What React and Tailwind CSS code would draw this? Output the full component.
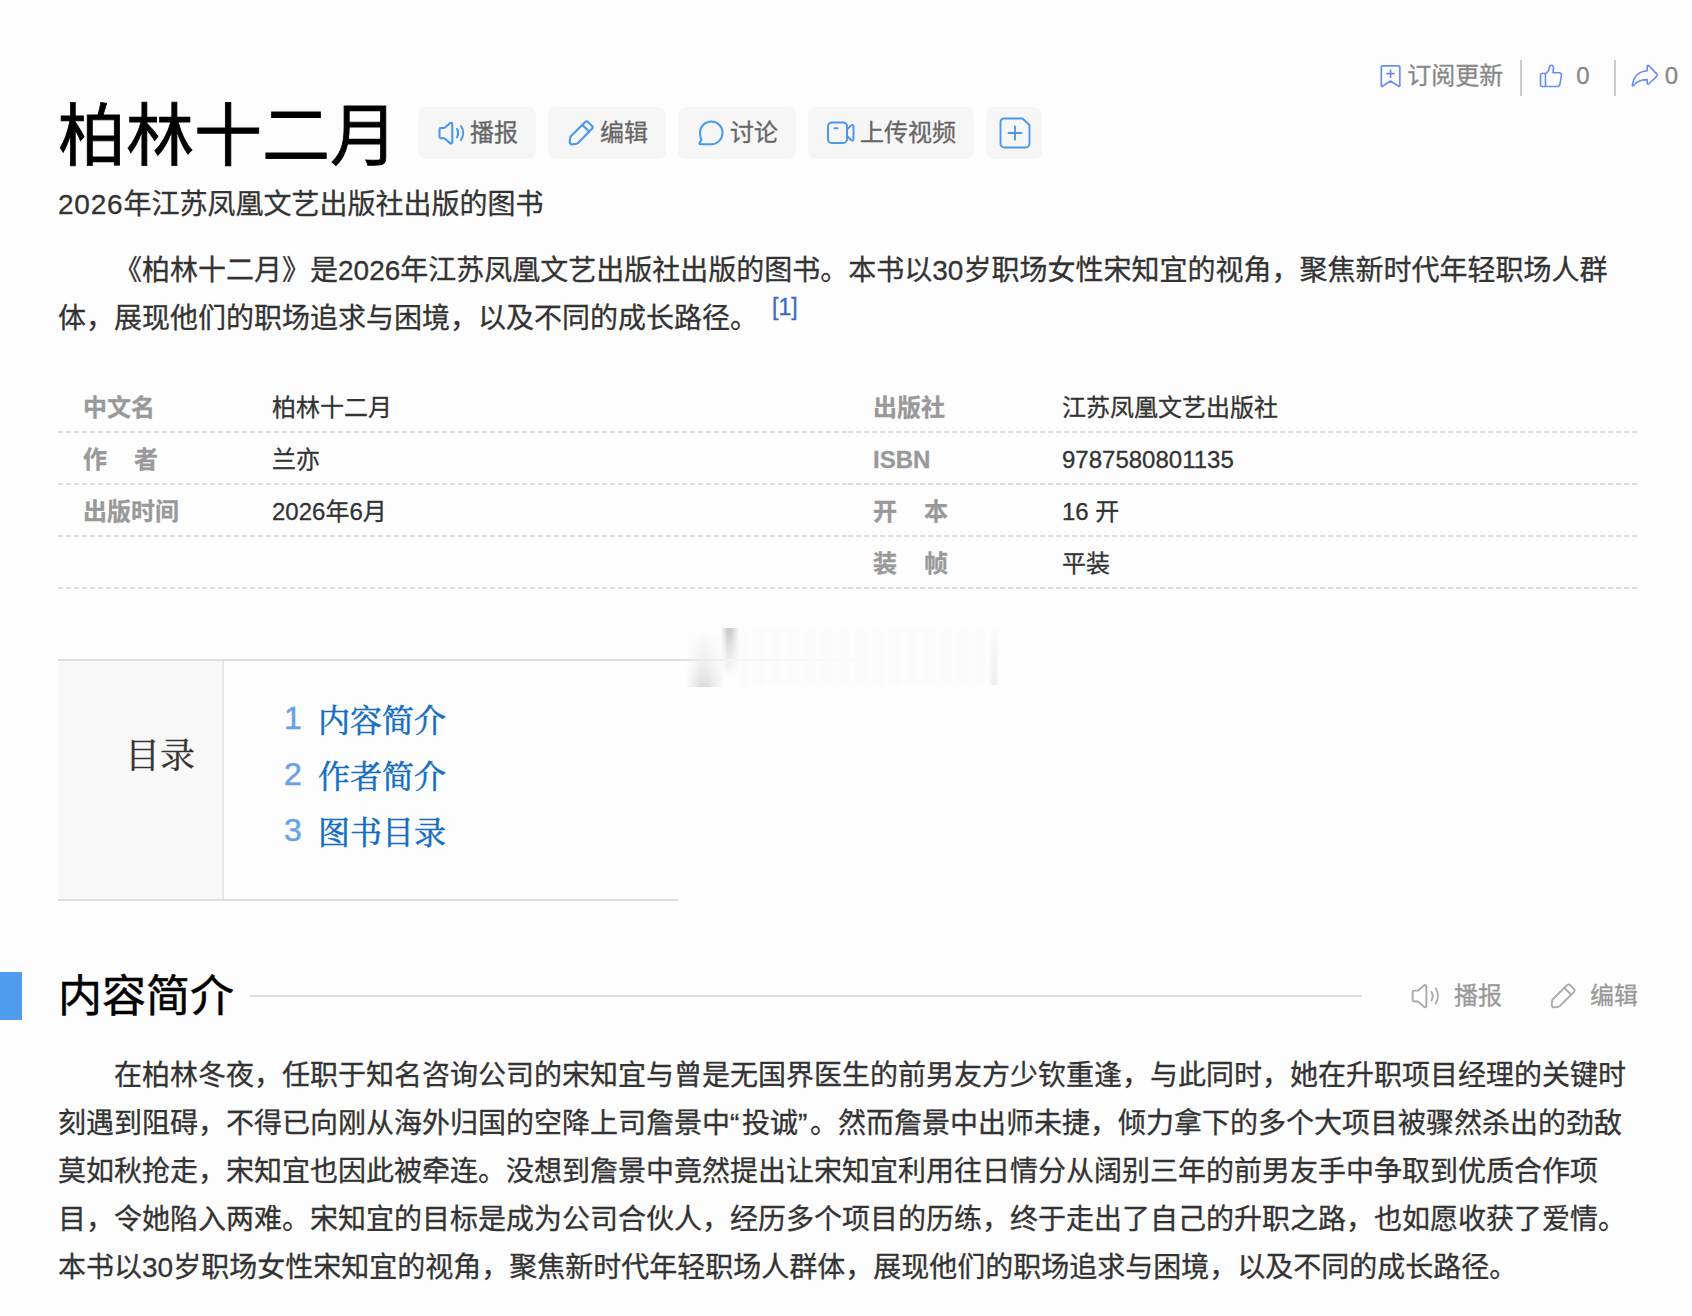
import React from "react";

const stroke = { fill: "none", stroke: "currentColor", strokeLinecap: "round", strokeLinejoin: "round" };

function Speaker({ w = 2.1, className }) {
  return (
    <svg viewBox="0 0 28 28" className={className} {...stroke} strokeWidth={w}>
      <path d="M2.500 10.400c0-.8.600-1.400 1.400-1.400h3.400l5.800-4.900c.9-.7 2.200-.1 2.200 1v18c0 1.100-1.300 1.700-2.200 1l-5.800-4.900H3.900c-.8 0-1.400-.6-1.400-1.400z" />
      <path d="M20 10c1.500 2.500 1.500 5.700 0 8.200M24 7c2.800 4.200 2.800 9.800 0 14" />
    </svg>
  );
}

function Pencil({ w = 2.1, className }) {
  return (
    <svg viewBox="0 0 28 28" className={className} {...stroke} strokeWidth={w}>
      <path d="M18.200 3c.8-.8 2-.8 2.800 0l4 4c.8.8.8 2 0 2.800L11 23.900c-.5.5-1 .8-1.700.9l-3.800.6c-1.700.2-3-1-2.800-2.700l.5-4c.1-.7.400-1.200.9-1.700z" />
      <path d="M15.400 5.900l6.700 6.700" />
    </svg>
  );
}

function Chat({ className }) {
  return (
    <svg viewBox="0 0 28 28" className={className} {...stroke} strokeWidth="2">
      <path d="M14.300 2.500c6.300 0 11.200 5 11.200 11.300S20.600 25.200 14.300 25.200H3.300c-.9 0-1.200-.8-.7-1.400l1.900-2.900C3.500 18.800 3 16.500 3 13.800 3 7.500 8 2.500 14.300 2.500z" />
    </svg>
  );
}

function Video({ className }) {
  return (
    <svg viewBox="0 0 30 28" className={className} {...stroke} strokeWidth="2">
      <rect x="2" y="3.500" width="19" height="20.500" rx="3.800" />
      <path d="M8.500 9.200h3M21 10.500l4.200-4.100c.8-.7 2.300-.4 2.300.9v12.900c0 1.300-1.500 1.600-2.300.9L21 17" />
    </svg>
  );
}

function AddBox({ className }) {
  return (
    <svg viewBox="0 0 32 32" className={className} {...stroke} strokeWidth="1.900">
      <path d="M5 1.500h18.500L30.500 8v18.500a4 4 0 0 1-4 4H5.500a4 4 0 0 1-4-4V5a3.500 3.500 0 0 1 3.500-3.500zM16 9.500v13M9.500 16h13" />
    </svg>
  );
}

function Bookmark({ className }) {
  return (
    <svg viewBox="0 0 24 26" className={className} {...stroke} strokeWidth="1.700">
      <path d="M3.500 2.800h16c.8 0 1.300.5 1.300 1.300v18.600c0 .7-.7 1-1.200.6L11.500 18l-8 5.300c-.6.4-1.200.1-1.200-.6V4.100c0-.8.5-1.300 1.200-1.300zM11.500 7.200v7M8 10.700h7" />
    </svg>
  );
}

function Thumb({ className }) {
  return (
    <svg viewBox="0 0 24 24" className={className} {...stroke} strokeWidth="1.600">
      <path d="M3 9.500h3.500v13H3c-.8 0-1.500-.6-1.500-1.500V11c0-.9.700-1.500 1.500-1.500zM6.500 9.500c2.600-1.400 3.600-3.400 3.900-6.300.1-1.200.8-2 1.900-2 1.500 0 2.400 1.400 2.200 3.200l-.6 4.300h6.200c1.600 0 2.600 1.300 2.300 2.900l-1.400 8.200c-.3 1.600-1.400 2.700-3 2.700H6.500" />
    </svg>
  );
}

function Share({ className }) {
  return (
    <svg viewBox="0 0 28 24" className={className} {...stroke} strokeWidth="1.600">
      <path d="M16.200 2.300c0-.8.9-1.200 1.500-.7l8 8.300c.8.900.8 1.700 0 2.500l-8 7.600c-.6.500-1.500.1-1.500-.7v-3.700c-6-.2-10.500 1.800-14 6.200-.4.400-.9.200-.8-.4C2.400 12.800 7.700 7.600 16.200 6.800z" />
    </svg>
  );
}

const btn = "flex h-[52px] items-center rounded-lg bg-[#f6f6f6] text-2xl text-[#666]";
const blue = "text-[#4b97ea]";

const left = [["中文名", "柏林十二月"], ["作|者", "兰亦"], ["出版时间", "2026年6月"], ["", ""]];
const right = [["出版社", "江苏凤凰文艺出版社"], ["ISBN", "9787580801135"], ["开|本", "16 开"], ["装|帧", "平装"]];

function Column({ rows }) {
  return (
    <dl className="w-[790px]">
      {rows.map(([k, v], i) => (
        <div key={i} className="flex h-[52px] flex-col">
          <div className="flex h-[50px] items-center pt-[3px] pl-[25px] text-2xl">
            <dt className="flex w-[189px] gap-[27px] font-bold text-[#999]">
              {k.split("|").map((c) => (
                <span key={c}>{c}</span>
              ))}
            </dt>
            <dd className="text-[#333]">{v}</dd>
          </div>
          <div className="h-[2px] bg-[repeating-linear-gradient(90deg,#dedede_0px,#dedede_4.5px,transparent_5px,transparent_8px)]" />
        </div>
      ))}
    </dl>
  );
}

const body = [
  "在柏林冬夜，任职于知名咨询公司的宋知宜与曾是无国界医生的前男友方少钦重逢，与此同时，她在升职项目经理的关键时",
  <>
    刻遇到阻碍，不得已向刚从海外归国的空降上司詹景中<span className="tracking-[2.6px]">“</span>投诚
    <span className="tracking-[2.6px]">”</span>。然而詹景中出师未捷，倾力拿下的多个大项目被骤然杀出的劲敌
  </>,
  "莫如秋抢走，宋知宜也因此被牵连。没想到詹景中竟然提出让宋知宜利用往日情分从阔别三年的前男友手中争取到优质合作项",
  "目，令她陷入两难。宋知宜的目标是成为公司合伙人，经历多个项目的历练，终于走出了自己的升职之路，也如愿收获了爱情。",
  "本书以30岁职场女性宋知宜的视角，聚焦新时代年轻职场人群体，展现他们的职场追求与困境，以及不同的成长路径。",
];

export default function App() {
  return (
    <div
      lang="zh-CN"
      className="flex h-[1316px] w-[1692px] flex-col overflow-hidden bg-[#fdfdfd] font-['Liberation_Sans','Noto_Sans_CJK_SC',sans-serif] whitespace-nowrap text-[#333] [-webkit-text-stroke:0.3px]"
    >
      <div className="flex h-[98px] items-start justify-end pt-[58px] pr-[14px] text-2xl text-[#888]">
        <div className="flex h-9 items-center">
          <Bookmark className="mr-1 h-[26px] w-6 text-[#6b8cf0]" />
          <span>订阅更新</span>
          <span className="mt-1 ml-[17px] h-9 w-[2px] bg-[#ccc]" />
          <Thumb className="ml-[17px] h-6 w-6 text-[#6b8cf0]" />
          <span className="ml-[13px]">0</span>
          <span className="mt-1 ml-6 h-9 w-[2px] bg-[#ccc]" />
          <Share className="mr-[6px] ml-[15px] h-6 w-7 text-[#6b8cf0]" />
          <span>0</span>
        </div>
      </div>

      <header className="flex h-[76px] items-center pl-[58px]">
        <h1 className="w-[360px] text-[68px] leading-[72px] text-black [-webkit-text-stroke:0.8px]">柏林十二月</h1>
        <div className="flex gap-3 pb-[6px]">
          <button className={btn + " w-[118px] pl-[19px]"}>
            <Speaker className={"mr-[5px] h-7 w-7 " + blue} />播报
          </button>
          <button className={btn + " w-[118px] pl-[19px]"}>
            <Pencil className={"mr-[5px] h-7 w-7 " + blue} />编辑
          </button>
          <button className={btn + " w-[118px] pl-[19px]"}>
            <Chat className={"mr-[5px] h-7 w-7 " + blue} />讨论
          </button>
          <button className={btn + " w-[166px] pl-[18px]"}>
            <Video className={"mr-1 h-7 w-[30px] " + blue} />上传视频
          </button>
          <button className={btn + " w-14 pl-[13px]"}>
            <AddBox className={"h-8 w-8 " + blue} />
          </button>
        </div>
      </header>

      <p className="h-[73px] pt-[11px] pl-[58px] text-[28px] leading-10">
        <span className="tracking-[0.8px]">2026</span>年江苏凤凰文艺出版社出版的图书
      </p>

      <div className="h-[134px] pl-[58px] text-[28px] leading-[48px]">
        <p className="pl-14">《柏林十二月》是2026年江苏凤凰文艺出版社出版的图书。本书以30岁职场女性宋知宜的视角，聚焦新时代年轻职场人群</p>
        <p className="flex">
          体，展现他们的职场追求与困境，以及不同的成长路径。
          <a className="-mt-3 ml-[14px] text-[23px] text-[#3a6bc0]">[1]</a>
        </p>
      </div>

      <section className="flex h-[278px] pl-[58px]">
        <Column rows={left} />
        <Column rows={right} />
      </section>

      <section className="relative flex h-[313px] pl-[58px]">
        <div className="flex h-[242px] w-[620px] border-y-2 border-[#dedede]">
          <div className="h-full w-[166px] border-r-2 border-[#e6e6e6] bg-[#f8f8f8] pt-[66px] pl-[67px] font-['Noto_Serif_CJK_SC','Noto_Sans_CJK_SC',serif] text-[35px] leading-[52px]">
            目录
          </div>
          <ol className="pt-[29px] pl-[60px] text-[32px] leading-[56px] text-[#136ec2] [-webkit-text-stroke:0.5px]">
            {["内容简介", "作者简介", "图书目录"].map((t, i) => (
              <li key={t} className="flex">
                <span className="w-[34px] text-[#6ba3e2]">{i + 1}</span>
                <a className="font-['Noto_Serif_CJK_SC','Noto_Sans_CJK_SC',serif]">{t}</a>
              </li>
            ))}
          </ol>
        </div>
        <div className="absolute -top-[30px] left-[740px] h-[56px] w-[258px] bg-[repeating-linear-gradient(90deg,#fbfbfb_0px,#fbfbfb_7px,#fdfdfd_9px,#fbfbfb_17px)]" />
        <div className="absolute -top-[30px] left-[686px] h-[58px] w-[38px] bg-gradient-to-t from-[#dcdcdc] via-[#eeeeee] via-35% to-[#fdfdfd] [mask-image:linear-gradient(90deg,transparent,black_40%,black_55%,transparent)]" />
        <div className="absolute -top-[31px] left-[721px] h-[48px] w-[19px] bg-gradient-to-b from-[#c8c8c8] via-[#e0e0e0] via-40% to-[#fdfdfd] [mask-image:linear-gradient(90deg,transparent,black_35%,black_50%,transparent)]" />
        <div className="absolute -top-[28px] left-[989px] h-[54px] w-[10px] bg-gradient-to-t from-[#ebebeb] to-[#fbfbfb] [mask-image:linear-gradient(90deg,transparent,black,transparent)]" />
        <div className="absolute top-0 left-[678px] h-[2px] w-[190px] bg-gradient-to-r from-[#dedede] via-[#f5f5f5] via-30% to-[#fbfbfb]" />
      </section>

      <section>
        <div className="flex h-12 items-center text-[#999]">
          <span className="h-12 w-[22px] bg-[#4f9cee]" />
          <h2 className="mt-[2px] ml-9 text-[44px] leading-[48px] text-black [-webkit-text-stroke:0.5px]">内容简介</h2>
          <span className="ml-4 h-[2px] w-[1112px] bg-[#dedede]" />
          <Speaker w={1.8} className="ml-[48px] h-[30px] w-[30px] text-[#aaa]" />
          <span className="ml-[14px] text-2xl">播报</span>
          <Pencil w={1.8} className="ml-[47px] h-7 w-7 text-[#aaa]" />
          <span className="ml-[13px] text-2xl">编辑</span>
        </div>
        <div className="pt-8 pl-[58px] text-[28px] leading-[48px]">
          {body.map((t, i) => (
            <p key={i} className={i ? "" : "pl-14"}>{t}</p>
          ))}
        </div>
      </section>
    </div>
  );
}
